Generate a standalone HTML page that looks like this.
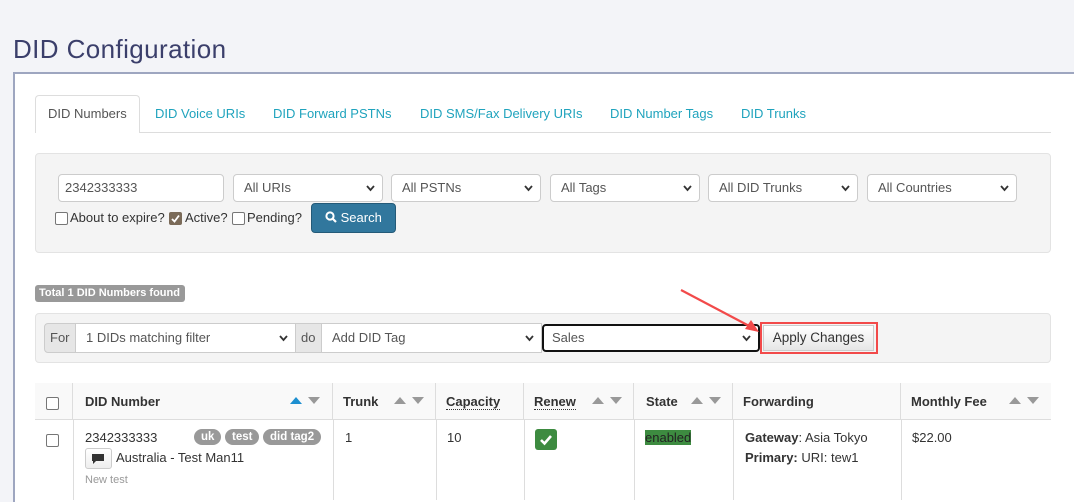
<!DOCTYPE html>
<html><head><meta charset="utf-8"><style>
*{box-sizing:border-box;margin:0;padding:0}
body{width:1074px;height:494px;overflow:hidden;background:#f3f4f8;font-family:"Liberation Sans",Arial,sans-serif;font-size:13px;color:#333;position:relative}
.a{position:absolute}
.panel{left:13px;top:72px;width:1070px;height:430px;background:#fff;border-left:2px solid #9ea6c0;border-top:2px solid #9ea6c0}
.tab{top:106px;color:#1fa3bd;font-size:13px}
.ctl{height:28px;background:#fff;border:1px solid #ccc;border-radius:4px;padding:0 10px;line-height:26px;font-size:13px;color:#555}
.chev{position:absolute;right:7px;top:10px}
.th{top:383px;height:37px;line-height:37px;font-weight:bold;color:#333;border-right:1px solid #ddd;padding-left:10px}
.cb{width:13px;height:13px;border:1px solid #767676;border-radius:2px;background:#fff}
.tag{top:429px;height:16px;line-height:16px;background:#999;color:#fff;font-weight:bold;font-size:11.5px;border-radius:8px;padding:0 7px}
</style></head><body>
<div class="a" style="left:13px;top:34px;font-size:26px;letter-spacing:0.4px;color:#3b3f6b">DID Configuration</div>
<div class="a panel"></div>

<div class="a" style="left:35px;top:95px;width:105px;height:38px;border:1px solid #ddd;border-bottom:none;border-radius:4px 4px 0 0;background:#fff;z-index:2"></div>
<div class="a" style="left:35px;top:132px;width:1016px;height:1px;background:#ddd"></div>
<div class="a tab" style="left:48px;color:#555;z-index:3">DID Numbers</div>
<div class="a tab" style="left:155px">DID Voice URIs</div>
<div class="a tab" style="left:273px">DID Forward PSTNs</div>
<div class="a tab" style="left:420px">DID SMS/Fax Delivery URIs</div>
<div class="a tab" style="left:610px">DID Number Tags</div>
<div class="a tab" style="left:741px">DID Trunks</div>

<div class="a" style="left:35px;top:153px;width:1016px;height:100px;background:#f4f4f4;border:1px solid #e3e3e3;border-radius:4px"></div>
<div class="a ctl" style="left:58px;top:174px;width:166px;padding-left:6px">2342333333</div>
<div class="a ctl" style="left:233px;top:174px;width:150px">All URIs<svg class="chev" width="9" height="7"><polyline points="1,1 4.5,5 8,1" fill="none" stroke="#333" stroke-width="1.8"/></svg></div>
<div class="a ctl" style="left:391px;top:174px;width:150px">All PSTNs<svg class="chev" width="9" height="7"><polyline points="1,1 4.5,5 8,1" fill="none" stroke="#333" stroke-width="1.8"/></svg></div>
<div class="a ctl" style="left:550px;top:174px;width:150px">All Tags<svg class="chev" width="9" height="7"><polyline points="1,1 4.5,5 8,1" fill="none" stroke="#333" stroke-width="1.8"/></svg></div>
<div class="a ctl" style="left:708px;top:174px;width:150px">All DID Trunks<svg class="chev" width="9" height="7"><polyline points="1,1 4.5,5 8,1" fill="none" stroke="#333" stroke-width="1.8"/></svg></div>
<div class="a ctl" style="left:867px;top:174px;width:150px">All Countries<svg class="chev" width="9" height="7"><polyline points="1,1 4.5,5 8,1" fill="none" stroke="#333" stroke-width="1.8"/></svg></div>

<div class="a cb" style="left:55px;top:212px"></div>
<div class="a" style="left:70px;top:210px">About to expire?</div>
<div class="a cb" style="left:169px;top:212px;background:#7a6a58;border-color:#7a6a58"><svg width="11" height="11" style="position:absolute;left:0;top:0"><polyline points="2,6 4.5,8.5 9,2.5" fill="none" stroke="#fff" stroke-width="1.8"/></svg></div>
<div class="a" style="left:185px;top:210px">Active?</div>
<div class="a cb" style="left:232px;top:212px"></div>
<div class="a" style="left:247px;top:210px">Pending?</div>
<div class="a" style="left:311px;top:203px;width:85px;height:30px;background:#31779d;border:1px solid #245a78;border-radius:4px;color:#fff;line-height:28px;padding-left:13px">
<svg width="12" height="12" style="vertical-align:-1px"><circle cx="5" cy="5" r="3.6" fill="none" stroke="#fff" stroke-width="2"/><line x1="7.5" y1="7.5" x2="11" y2="11" stroke="#fff" stroke-width="2.2"/></svg> Search</div>

<div class="a" style="left:35px;top:285px;width:150px;height:17px;background:#999;border-radius:3px;color:#fff;font-weight:bold;font-size:11px;line-height:17px;padding-left:4px">Total 1 DID Numbers found</div>

<div class="a" style="left:35px;top:313px;width:1016px;height:50px;background:#f4f4f4;border:1px solid #e3e3e3;border-radius:4px"></div>
<div class="a" style="left:44px;top:323px;width:32px;height:30px;background:#e6e6e6;border:1px solid #ccc;border-radius:4px 0 0 4px;line-height:28px;padding-left:5px;color:#555">For</div>
<div class="a ctl" style="left:75px;top:323px;width:221px;height:30px;line-height:28px;border-radius:0">1 DIDs matching filter<svg class="chev" width="9" height="7" style="top:11px"><polyline points="1,1 4.5,5 8,1" fill="none" stroke="#333" stroke-width="1.8"/></svg></div>
<div class="a" style="left:295px;top:323px;width:27px;height:30px;background:#e6e6e6;border:1px solid #ccc;line-height:28px;padding-left:5px;color:#555">do</div>
<div class="a ctl" style="left:321px;top:323px;width:221px;height:30px;line-height:28px;border-radius:0">Add DID Tag<svg class="chev" width="9" height="7" style="top:11px"><polyline points="1,1 4.5,5 8,1" fill="none" stroke="#333" stroke-width="1.8"/></svg></div>
<div class="a ctl" style="left:542px;top:324px;width:218px;height:28px;border:2px solid #111;line-height:24px;padding-left:8px">Sales<svg class="chev" width="9" height="7" style="top:9px"><polyline points="1,1 4.5,5 8,1" fill="none" stroke="#333" stroke-width="1.8"/></svg></div>
<div class="a" style="left:760px;top:322px;width:118px;height:32px;border:2px solid #f24a4a"></div>
<div class="a" style="left:763px;top:325px;width:111px;height:26px;background:linear-gradient(#fff,#e6e6e6);border:1px solid #ccc;line-height:24px;text-align:center;color:#333;font-size:13.5px">Apply Changes</div>
<svg class="a" style="left:675px;top:285px" width="90" height="55"><line x1="6" y1="5" x2="78" y2="43" stroke="#f24a4a" stroke-width="2.2"/><polygon points="84,47 70,44 76,35" fill="#f24a4a"/></svg>

<div class="a" style="left:35px;top:383px;width:1016px;height:37px;background:#f9f9f9;border-bottom:1px solid #ddd"></div>
<div class="a cb" style="left:46px;top:397px"></div>
<div class="a th" style="left:35px;width:38px"></div>
<div class="a th" style="left:73px;width:260px;padding-left:12px">DID Number</div>
<div class="a th" style="left:333px;width:103px">Trunk</div>
<div class="a th" style="left:436px;width:88px"><span style="border-bottom:1px dotted #333;line-height:14px;display:inline-block">Capacity</span></div>
<div class="a th" style="left:524px;width:110px"><span style="border-bottom:1px dotted #333;line-height:14px;display:inline-block">Renew</span></div>
<div class="a th" style="left:634px;width:99px;padding-left:12px">State</div>
<div class="a th" style="left:733px;width:168px">Forwarding</div>
<div class="a th" style="left:901px;width:150px;border-right:none">Monthly Fee</div>
<svg class="a" style="left:290px;top:396px" width="34" height="8"><polygon points="0,8 6,1 12,8" fill="#1d8fd0"/><polygon points="18,1 30,1 24,8" fill="#999"/></svg>
<svg class="a" style="left:394px;top:396px" width="34" height="8"><polygon points="0,8 6,1 12,8" fill="#999"/><polygon points="18,1 30,1 24,8" fill="#999"/></svg>
<svg class="a" style="left:592px;top:396px" width="34" height="8"><polygon points="0,8 6,1 12,8" fill="#999"/><polygon points="18,1 30,1 24,8" fill="#999"/></svg>
<svg class="a" style="left:691px;top:396px" width="34" height="8"><polygon points="0,8 6,1 12,8" fill="#999"/><polygon points="18,1 30,1 24,8" fill="#999"/></svg>
<svg class="a" style="left:1009px;top:396px" width="34" height="8"><polygon points="0,8 6,1 12,8" fill="#999"/><polygon points="18,1 30,1 24,8" fill="#999"/></svg>

<div class="a" style="left:73px;top:420px;width:1px;height:80px;background:#ddd"></div>
<div class="a" style="left:333px;top:420px;width:1px;height:80px;background:#ddd"></div>
<div class="a" style="left:436px;top:420px;width:1px;height:80px;background:#ddd"></div>
<div class="a" style="left:524px;top:420px;width:1px;height:80px;background:#ddd"></div>
<div class="a" style="left:634px;top:420px;width:1px;height:80px;background:#ddd"></div>
<div class="a" style="left:733px;top:420px;width:1px;height:80px;background:#ddd"></div>
<div class="a" style="left:901px;top:420px;width:1px;height:80px;background:#ddd"></div>

<div class="a cb" style="left:46px;top:434px"></div>
<div class="a" style="left:85px;top:430px">2342333333</div>
<div class="a tag" style="left:194px">uk</div>
<div class="a tag" style="left:225px">test</div>
<div class="a tag" style="left:263px">did tag2</div>
<div class="a" style="left:85px;top:448px;width:27px;height:21px;border:1px solid #ccc;border-radius:3px;background:linear-gradient(#fff,#eee)"><svg width="13" height="11" style="position:absolute;left:6px;top:5px"><path d="M0 0H12V7H4L1 10V7H0Z" fill="#333"/></svg></div>
<div class="a" style="left:116px;top:450px">Australia - Test Man11</div>
<div class="a" style="left:85px;top:474px;font-size:11px;color:#999">New test</div>
<div class="a" style="left:345px;top:430px">1</div>
<div class="a" style="left:447px;top:430px">10</div>
<div class="a" style="left:535px;top:429px;width:22px;height:21px;background:#3d8b40;border-radius:3px"><svg width="22" height="21"><polyline points="6,11 9.5,14.5 16,7" fill="none" stroke="#fff" stroke-width="2.6"/></svg></div>
<div class="a" style="left:645px;top:430px;background:#3d8b40;color:#222;line-height:15px">enabled</div>
<div class="a" style="left:745px;top:430px"><b>Gateway</b>: Asia Tokyo</div>
<div class="a" style="left:745px;top:450px"><b>Primary:</b> URI: tew1</div>
<div class="a" style="left:912px;top:430px">$22.00</div>
</body></html>
